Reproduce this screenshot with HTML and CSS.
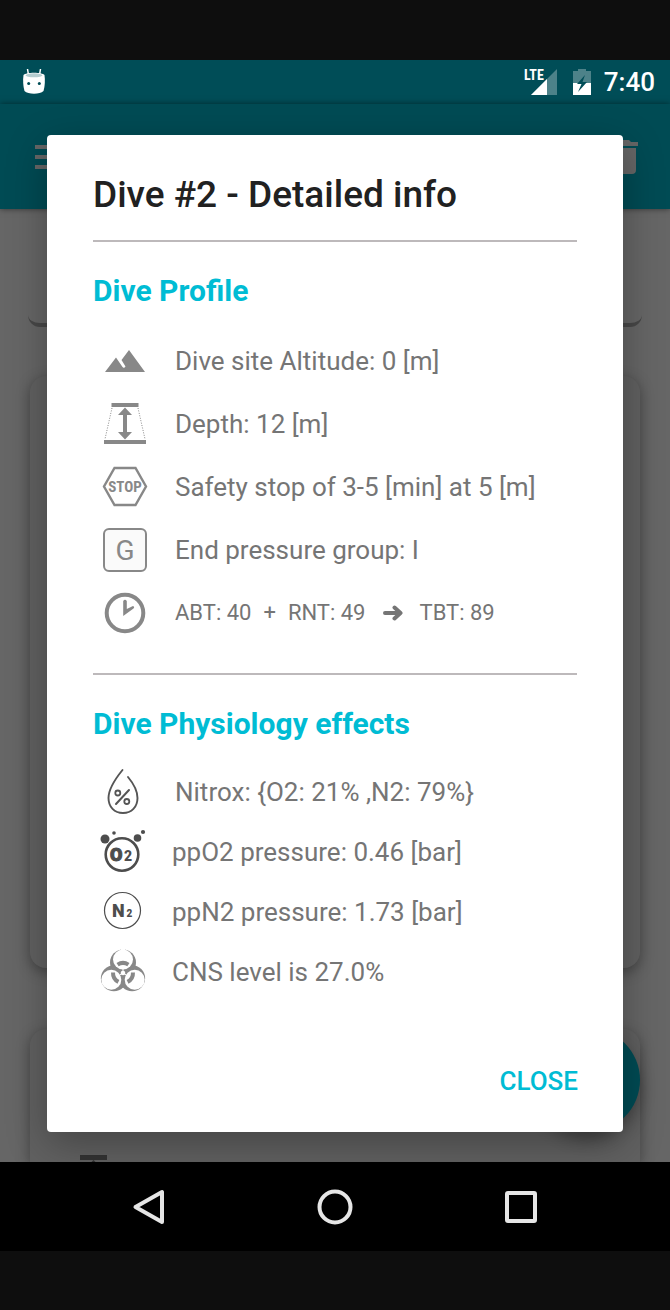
FILE: index.html
```html
<!DOCTYPE html>
<html lang="en">
<head>
<meta charset="utf-8">
<meta name="viewport" content="width=device-width, initial-scale=1">
<title>Dive #2 - Detailed info</title>
<link rel="stylesheet" href="styles.css">
</head>
<body>
<div class="device">
  <div class="stage">
    <div class="app" aria-hidden="true">
      <header class="status">
        <svg width="24" height="28" viewBox="0 0 24 28">
          <path d="M5.500 1 6.500 7M18.500 1 17.500 7" stroke="#fff" stroke-width="1.500"/>
          <path d="M1.500 7C4 4 20 4 22.500 7C23.200 12 23 18 21.500 23C18 26.500 6 26.500 2.500 23C1 18 .8 12 1.500 7Z" fill="#fff"/>
          <ellipse cx="12" cy="7.300" rx="8.500" ry="2" fill="#b5cdd0"/>
          <circle cx="6.700" cy="15.500" r="1.500" fill="#004d57"/><circle cx="17.300" cy="15.500" r="1.500" fill="#004d57"/>
        </svg>
        <div class="status-right">
          <svg width="34" height="28" viewBox="0 0 34 28">
            <path d="M33 1V27H7Z" fill="#4d8289"/><path d="M23 11V27H7Z" fill="#fff"/>
            <text class="lte" x="0" y="12">LTE</text>
          </svg>
          <svg width="20" height="28" viewBox="0 0 20 28">
            <path d="M1 3H6V1H14V3H19V15H1Z" fill="#4d8289"/><path d="M1 15H19V27H1Z" fill="#fff"/>
            <path d="M13 7 5 16H9.500L6 24 15 14H10.500Z" fill="#004d57"/>
          </svg>
          <span class="clock">7:40</span>
        </div>
      </header>
      <div class="appbar">
        <svg width="36" height="26" viewBox="0 0 36 26"><path d="M0 3H36M0 13H36M0 23H36" stroke="#666" stroke-width="4"/></svg>
        <svg width="28" height="36" viewBox="0 0 28 36"><path d="M0 3H7L9 1H19L21 3H28V7H0ZM2 9H26V31Q26 35 22 35H6Q2 35 2 31Z" fill="#666"/></svg>
      </div>
      <div class="content">
        <div class="card card-top"></div>
        <div class="card card-mid"></div>
        <div class="card card-next">
          <svg class="peek" width="28" height="7" viewBox="0 0 28 7"><path d="M0 0H27V5H0ZM13.500 5 15.500 7H11.500Z" fill="#333"/></svg>
        </div>
        <div class="fab"></div>
      </div>
    </div>

    <div class="overlay">
      <section class="dialog" role="dialog" aria-labelledby="dialog-title">
        <div class="dialog-body">
          <h1 class="title" id="dialog-title">Dive #2 - Detailed info</h1>
          <hr class="rule">
          <h2 class="heading">Dive Profile</h2>
          <ul class="list profile">
            <li class="row">
              <svg class="icon" viewBox="0 0 44 44"><path d="M2 33 13 18.500 19.500 28 21 29 22.500 27.500 18.500 21 26 11 42 33Z" fill="#888"/></svg>
              <span>Dive site Altitude: 0 [m]</span>
            </li>
            <li class="row">
              <svg class="icon" viewBox="0 0 44 44"><path d="M8.500 1H35.500V5H8.500ZM1 38H43V42H1Z" fill="#888"/><path d="M9 6 2 37M35 6 42 37" stroke="#888" stroke-dasharray="1 1.500"/><path d="M22 5.500 29 13H24V30H29L22 37.500 15 30H20V13H15Z" fill="#888"/></svg>
              <span>Depth: 12 [m]</span>
            </li>
            <li class="row">
              <svg class="icon" viewBox="0 0 44 44"><path d="M11.500 3H32.500L43 21.500 32.500 40H11.500L1 21.500Z" fill="none" stroke="#888" stroke-width="2.400"/><text class="glyph-stop" x="22" y="27" text-anchor="middle">STOP</text></svg>
              <span>Safety stop of 3-5 [min] at 5 [m]</span>
            </li>
            <li class="row">
              <svg class="icon" viewBox="0 0 44 44"><rect x="1" y="1" width="42" height="42" rx="5" fill="#fafafa" stroke="#888" stroke-width="2"/><text class="glyph-group" x="22" y="32" text-anchor="middle">G</text></svg>
              <span>End pressure group: I</span>
            </li>
            <li class="row row-times">
              <svg class="icon" viewBox="0 0 44 44"><circle cx="22" cy="22" r="18.300" fill="none" stroke="#888" stroke-width="4"/><path d="M20.200 10Q22 7.500 23.800 10V18L30 15Q32 16 30.500 17.500L20.200 25Z" fill="#888"/></svg>
              <span class="times"><span>ABT: 40</span><span>+</span><span>RNT: 49</span>
                <svg class="arrow" width="20" height="16" viewBox="0 0 20 16"><path d="M2 8H17M11.500 2.500 17.500 8 11.500 13.500" fill="none" stroke="#757575" stroke-width="4" stroke-linecap="round" stroke-linejoin="round"/></svg>
                <span>TBT: 89</span></span>
            </li>
          </ul>
          <hr class="rule">
          <h2 class="heading">Dive Physiology effects</h2>
          <ul class="list physiology">
            <li class="row row-nitrox">
              <svg class="icon" viewBox="0 0 44 46"><path d="M21.500 1C15 9 7.500 19 7.500 29C7.500 38 13.500 44 22 44C30.500 44 36.500 38 36.500 29C36.500 21 32 14 27 8" fill="none" stroke="#555" stroke-width="1.900" stroke-linecap="round"/><path d="M28 21 15 35" stroke="#555" stroke-width="2" stroke-linecap="round"/><circle cx="16.800" cy="24" r="2.500" fill="none" stroke="#555" stroke-width="1.800"/><circle cx="25.800" cy="32.500" r="2.500" fill="none" stroke="#555" stroke-width="1.800"/></svg>
              <span>Nitrox: {O2: 21% ,N2: 79%}</span>
            </li>
            <li class="row">
              <svg class="icon" viewBox="0 0 44 46"><circle cx="21" cy="25.500" r="16.300" fill="none" stroke="#4d4d4d" stroke-width="2.600"/><circle cx="4" cy="10" r="4.500" fill="#4d4d4d"/><circle cx="13" cy="4" r="1.800" fill="#4d4d4d"/><circle cx="36.500" cy="9" r="3.800" fill="#4d4d4d"/><circle cx="42" cy="3" r="2.100" fill="#4d4d4d"/><text class="glyph-o" x="9" y="32">O</text><text class="glyph-sub" x="23" y="32">2</text></svg>
              <span>ppO2 pressure: 0.46 [bar]</span>
            </li>
            <li class="row">
              <svg class="icon" viewBox="0 0 44 46"><circle cx="21.500" cy="21.500" r="18" fill="none" stroke="#4d4d4d" stroke-width="1.200"/><text class="glyph-n" x="11" y="28">N</text><text class="glyph-n2" x="25.500" y="28">2</text></svg>
              <span>ppN2 pressure: 1.73 [bar]</span>
            </li>
            <li class="row">
              <svg class="icon" viewBox="0 0 44 46">
                <g fill="#888"><circle cx="22" cy="13.500" r="13"/><circle cx="12.900" cy="29.300" r="13"/><circle cx="31.100" cy="29.300" r="13"/></g>
                <g fill="#fff"><circle cx="22" cy="10.500" r="10"/><circle cx="10.300" cy="30.800" r="10"/><circle cx="33.700" cy="30.800" r="10"/><path d="M20 0H24V3H20Z"/><circle cx="22" cy="24" r="2.300"/></g>
                <path id="arc" d="M16.600 15.600A10 10 0 0 1 27.400 15.600" fill="none" stroke="#888" stroke-width="4"/>
                <use href="#arc" transform="rotate(120 22 24)"/><use href="#arc" transform="rotate(240 22 24)"/>
                <path d="M22 24V20M22 24 18.500 26M22 24 25.500 26" stroke="#fff"/>
              </svg>
              <span>CNS level is 27.0%</span>
            </li>
          </ul>
        </div>
        <div class="actions"><button class="close" type="button">CLOSE</button></div>
      </section>
    </div>
  </div>

  <nav class="navbar" aria-label="System">
    <button class="nav-button" type="button" aria-label="Back"><svg width="36" height="36" viewBox="0 0 36 36"><path d="M31 3V33L4.500 18Z"/></svg></button>
    <button class="nav-button" type="button" aria-label="Home"><svg width="36" height="36" viewBox="0 0 36 36"><circle cx="18" cy="18" r="15.500"/></svg></button>
    <button class="nav-button" type="button" aria-label="Recent apps"><svg width="36" height="36" viewBox="0 0 36 36"><rect x="4" y="4" width="28" height="28" rx="1"/></svg></button>
  </nav>
</div>
</body>
</html>
```
FILE: styles.css
```css
* { box-sizing: border-box; }

body {
  margin: 0;
  background: #0e0e0e;
  font-family: Roboto, "Liberation Sans", sans-serif;
  color: #757575;
}

.device {
  display: flex;
  flex-direction: column;
  min-height: 100vh;
  padding: 60px 0 59px;
}

.stage {
  flex: 1;
  display: grid;
  grid-template-columns: minmax(0, 1fr);
  overflow: hidden;
}

.app,
.overlay { grid-area: 1 / 1; }

.app {
  display: flex;
  flex-direction: column;
  background: #666;
}

/* Status and app bars */
.status {
  display: flex;
  align-items: center;
  justify-content: space-between;
  height: 44px;
  padding: 0 15px 0 22px;
  background: #004d57;
  color: #fff;
}

.status-right {
  display: flex;
  align-items: center;
  gap: 14px;
}

.clock { font-size: 26px; font-weight: 500; line-height: 44px; margin-left: -2px; }
.lte { font: 700 14px "Liberation Sans Narrow", "Roboto Condensed", "Open Sans Condensed", Roboto, sans-serif; fill: #fff; }

.appbar {
  display: flex;
  align-items: center;
  justify-content: space-between;
  height: 105px;
  padding: 0 32px 0 35px;
  background: #004b54;
  box-shadow: 0 0 6px rgba(0, 0, 0, .5);
  z-index: 1;
}

/* Cards behind the dialog */
.content {
  position: relative;
  flex: 1;
  display: flex;
  flex-direction: column;
  padding: 0 30px;
  overflow: hidden;
}

.card {
  background: #616161;
  border-radius: 16px;
  box-shadow: 0 4px 14px rgba(0, 0, 0, .35);
}

.card-top {
  height: 118px;
  margin: 0 -2px;
  background: #666;
  border-bottom: 4px solid #484848;
  border-radius: 0 0 12px 12px;
  box-shadow: none;
}

.card-mid { height: 592px; margin-top: 49px; }

.card-next {
  flex: 1;
  margin-top: 61px;
  padding: 126px 50px 0;
  border-radius: 16px 16px 0 0;
}

.peek { display: block; }

.fab {
  position: absolute;
  right: 30px;
  bottom: 30px;
  width: 104px;
  height: 104px;
  border-radius: 50%;
  background: #004b54;
  box-shadow: 0 8px 16px rgba(0, 0, 0, .3);
}

/* Dialog */
.overlay {
  padding: 75px 47px 30px;
  z-index: 2;
}

.dialog {
  background: #fff;
  border-radius: 4px;
  box-shadow: 0 12px 40px rgba(0, 0, 0, .3);
}

.dialog-body { padding: 38px 46px 0; }

.title {
  margin: 0 0 23px;
  font-size: 37px;
  font-weight: 500;
  line-height: 44px;
  color: #212121;
}

.rule {
  margin: 0;
  border: 0;
  height: 2px;
  background: #bdb9bb;
}

.heading {
  margin: 32px 0 21px;
  font-size: 30px;
  font-weight: 700;
  line-height: 34px;
  color: #00bcd4;
}

.list {
  margin: 0;
  padding: 0;
  list-style: none;
  font-size: 26px;
}

.row {
  display: flex;
  align-items: center;
}

.icon { flex: none; overflow: visible; }

.profile { padding: 0 0 29px 10px; }
.profile .row { height: 63px; gap: 28px; }
.profile .icon { width: 44px; height: 44px; }

.physiology { padding-left: 8px; }
.physiology .row { height: 60px; gap: 27px; }
.physiology .row-nitrox { gap: 30px; }
.physiology .icon { width: 44px; height: 46px; }

.profile .row-times { font-size: 22px; }
.times { display: flex; align-items: center; gap: 12px; }
.arrow { margin: 0 5px; }

.glyph-stop { font: 700 15px "Liberation Sans Narrow", "Roboto Condensed", "Open Sans Condensed", Roboto, sans-serif; fill: #888; }
.glyph-group { font-size: 28px; fill: #888; }
.glyph-o { font: 900 18px Roboto, sans-serif; fill: #4d4d4d; stroke: #4d4d4d; stroke-width: 1px; }
.glyph-sub { font: 900 14px Roboto, sans-serif; fill: #4d4d4d; }
.glyph-n { font: 900 18px Roboto, sans-serif; fill: #4d4d4d; }
.glyph-n2 { font: 900 10px Roboto, sans-serif; fill: #4d4d4d; }

.actions {
  display: flex;
  justify-content: flex-end;
  padding: 43px 29px 15px;
}

.close {
  height: 72px;
  padding: 0 16px;
  border: 0;
  background: none;
  font: 500 26px Roboto, "Liberation Sans", sans-serif;
  color: #00bcd4;
}

/* System navigation */
.navbar {
  display: flex;
  justify-content: center;
  gap: 114px;
  height: 89px;
  background: #000;
}

.nav-button {
  display: grid;
  place-items: center;
  width: 72px;
  padding: 0;
  border: 0;
  background: none;
}

.nav-button svg {
  fill: none;
  stroke: #e6e6e6;
  stroke-width: 4;
  stroke-linejoin: round;
}
```
